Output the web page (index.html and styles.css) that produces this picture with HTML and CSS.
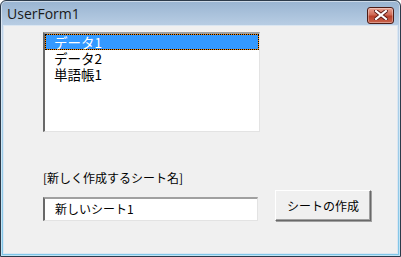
FILE: index.html
```html
<!DOCTYPE html>
<html lang="ja">
<head>
  <meta charset="UTF-8">
  <title>UserForm1</title>
  <link rel="stylesheet" href="styles.css">
</head>
<body>
  <div class="window">
    <div class="titlebar">
      <span class="title">UserForm1</span>
      <button class="close" aria-label="閉じる">
        <svg width="14" height="10" viewBox="0 0 14 10">
          <path d="M2 1 L12 9 M12 1 L2 9" stroke="#5a1a14" stroke-width="4" stroke-linecap="square"/>
          <path d="M2 1 L12 9 M12 1 L2 9" stroke="#fff" stroke-width="2.2" stroke-linecap="square"/>
        </svg>
      </button>
    </div>
    <div class="client">
      <ul class="listbox">
        <li class="selected">データ1</li>
        <li>データ2</li>
        <li>単語帳1</li>
      </ul>
      <div class="label">[新しく作成するシート名]</div>
      <div class="row">
        <div class="textbox">新しいシート1</div>
        <button class="cmd">シートの作成</button>
      </div>
    </div>
  </div>
</body>
</html>
```

FILE: styles.css
```css
* {
  box-sizing: border-box;
}
body {
  margin: 0;
  width: 401px;
  height: 257px;
  overflow: hidden;
  font-family: "Noto Sans CJK JP", sans-serif;
  background: #fff;
}
.window {
  width: 401px;
  height: 257px;
  display: flex;
  flex-direction: column;
  border: 1px solid #2c3a4a;
  border-radius: 6px 6px 0 0;
  background: linear-gradient(#99b4d1, #bfd3e8 30px, #7fc6e8);
  box-shadow: inset 0 0 0 1px rgba(255, 255, 255, .5);
}
.titlebar {
  height: 24px;
  display: flex;
  align-items: center;
  justify-content: space-between;
  padding: 0 6px 0 6px;
}
.title {
  font-family: "Open Sans", "Noto Sans", sans-serif;
  font-size: 14px;
  color: #1a1a1a;
  margin-top: 1px;
}
.close {
  width: 27px;
  height: 17px;
  margin-top: 4px;
  padding: 0;
  display: flex;
  align-items: center;
  justify-content: center;
  border: 1px solid #4c1c16;
  border-radius: 3px;
  background: linear-gradient(#e8a293, #cf6a55 45%, #b8402a 55%, #c9634c);
  box-shadow: inset 0 0 0 1px rgba(255, 255, 255, .35);
}
.client {
  flex: 1;
  margin: 0 2px 2px 2px;
  background: #f0f0f0;
  border: 1px solid #dbe6f1;
  padding: 6px 0 0 39px;
}
.listbox {
  list-style: none;
  margin: 0;
  padding: 0;
  width: 217px;
  height: 100px;
  background: #fff;
  border-top: 2px solid #a0a0a0;
  border-left: 2px solid #696969;
  border-right: 1px solid #e3e3e3;
  border-bottom: 1px solid #e3e3e3;
  font-size: 13.5px;
}
.listbox li {
  padding-left: 8px;
  height: 16px;
  color: #000;
  border: 1px solid transparent;
  line-height: 14px;
}
.listbox li.selected {
  color: #fff;
  border: 1px dotted #000;
  background: linear-gradient(#3399ff, #3399ff) padding-box, linear-gradient(#ff8800, #ff8800) border-box;
}
.label {
  margin-top: 38px;
  font-size: 12px;
  line-height: 16px;
  color: #000;
}
.row {
  display: flex;
  align-items: flex-end;
  gap: 17px;
  margin-top: 4px;
}
.textbox {
  width: 215px;
  height: 24px;
  background: #fff;
  border-top: 2px solid #a0a0a0;
  border-left: 2px solid #696969;
  border-right: 1px solid #e3e3e3;
  border-bottom: 1px solid #e3e3e3;
  font-size: 12px;
  line-height: 20px;
  padding-left: 10px;
}
.cmd {
  width: 96px;
  height: 31px;
  font-family: "Noto Sans CJK JP", sans-serif;
  font-size: 12px;
  color: #000;
  background: #f0f0f0;
  border: 1px solid #fff;
  border-right-color: #696969;
  border-bottom-color: #696969;
  box-shadow: 1px 1px 0 #a0a0a0, inset -1px -1px 0 #a0a0a0;
}
```
